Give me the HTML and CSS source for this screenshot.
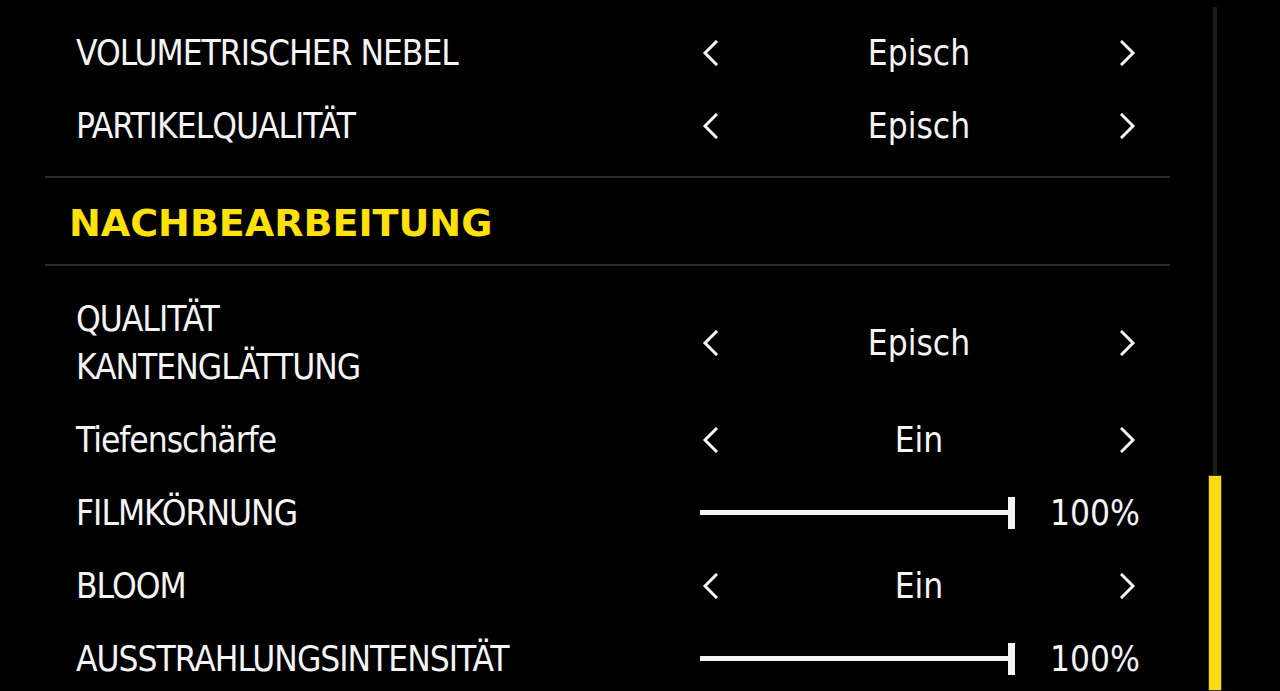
FILE: index.html
```html
<!DOCTYPE html>
<html lang="de">
<head>
<meta charset="utf-8">
<title>Grafik</title>
<link rel="stylesheet" href="styles.css">
</head>
<body>
<div class="screen">
  <div class="panel">
    <div class="row">
      <div class="label">VOLUMETRISCHER NEBEL</div>
      <div class="select">
        <svg class="chev" viewBox="0 0 16 26"><path d="M14 2 L3 13 L14 24"/></svg>
        <span class="value">Episch</span>
        <svg class="chev" viewBox="0 0 16 26"><path d="M2 2 L13 13 L2 24"/></svg>
      </div>
    </div>
    <div class="row">
      <div class="label">PARTIKELQUALITÄT</div>
      <div class="select">
        <svg class="chev" viewBox="0 0 16 26"><path d="M14 2 L3 13 L14 24"/></svg>
        <span class="value">Episch</span>
        <svg class="chev" viewBox="0 0 16 26"><path d="M2 2 L13 13 L2 24"/></svg>
      </div>
    </div>
    <div class="section">
      <h2 class="section-title">NACHBEARBEITUNG</h2>
    </div>
    <div class="rows">
      <div class="row">
        <div class="label">QUALITÄT<br>KANTENGLÄTTUNG</div>
        <div class="select">
          <svg class="chev" viewBox="0 0 16 26"><path d="M14 2 L3 13 L14 24"/></svg>
          <span class="value">Episch</span>
          <svg class="chev" viewBox="0 0 16 26"><path d="M2 2 L13 13 L2 24"/></svg>
        </div>
      </div>
      <div class="row">
        <div class="label">Tiefenschärfe</div>
        <div class="select">
          <svg class="chev" viewBox="0 0 16 26"><path d="M14 2 L3 13 L14 24"/></svg>
          <span class="value">Ein</span>
          <svg class="chev" viewBox="0 0 16 26"><path d="M2 2 L13 13 L2 24"/></svg>
        </div>
      </div>
      <div class="row">
        <div class="label">FILMKÖRNUNG</div>
        <div class="slider">
          <div class="track"><div class="fill" style="width:100%"></div><div class="thumb"></div></div>
          <span class="pct">100%</span>
        </div>
      </div>
      <div class="row">
        <div class="label">BLOOM</div>
        <div class="select">
          <svg class="chev" viewBox="0 0 16 26"><path d="M14 2 L3 13 L14 24"/></svg>
          <span class="value">Ein</span>
          <svg class="chev" viewBox="0 0 16 26"><path d="M2 2 L13 13 L2 24"/></svg>
        </div>
      </div>
      <div class="row">
        <div class="label">AUSSTRAHLUNGSINTENSITÄT</div>
        <div class="slider">
          <div class="track"><div class="fill" style="width:100%"></div><div class="thumb"></div></div>
          <span class="pct">100%</span>
        </div>
      </div>
    </div>
  </div>
  <div class="scrollbar">
    <div class="sb-track"></div>
    <div class="sb-thumb"></div>
  </div>
</div>
</body>
</html>
```
FILE: styles.css
```css
html, body {
  margin: 0;
  padding: 0;
  background: #000;
  height: 100%;
  overflow: hidden;
}
.screen {
  display: flex;
  height: 691px;
  color: #f4f4f4;
  font-family: "DejaVu Sans Condensed", "DejaVu Sans", sans-serif;
  font-stretch: condensed;
}
.panel {
  margin-left: 45px;
  width: 1125px;
  padding-top: 16px;
}
.row {
  display: grid;
  grid-template-columns: 1fr 440px;
  align-items: center;
  padding: 12.5px 30px 12.5px 31px;
}
.label {
  font-size: 35px;
  line-height: 48px;
  letter-spacing: -1px;
}
.select {
  display: flex;
  align-items: center;
  justify-content: space-between;
  padding: 0 4px 0 2px;
  height: 48px;
}
.chev {
  width: 16px;
  height: 26px;
  fill: none;
  stroke: #f4f4f4;
  stroke-width: 3;
  stroke-linecap: square;
}
.value {
  font-size: 35px;
  line-height: 48px;
  letter-spacing: 0;
}
.section {
  margin-top: 14px;
  border-top: 2px solid #2c2c2c;
  border-bottom: 2px solid #2c2c2c;
  height: 86px;
  display: flex;
  align-items: center;
  margin-bottom: 16px;
}
.section-title {
  margin: 0;
  padding: 3px 0 0 24px;
  font-family: "DejaVu Sans", sans-serif;
  font-stretch: normal;
  font-weight: bold;
  font-size: 38px;
  letter-spacing: 0;
  color: #ffe10a;
}
.slider {
  display: flex;
  align-items: center;
  height: 48px;
}
.track {
  position: relative;
  width: 315px;
  height: 5px;
}
.fill {
  height: 5px;
  background: #f4f4f4;
}
.thumb {
  position: absolute;
  right: 0;
  top: -13px;
  width: 7px;
  height: 32px;
  background: #f4f4f4;
}
.pct {
  margin-left: auto;
  font-size: 35px;
  line-height: 48px;
  letter-spacing: 0;
}
.scrollbar {
  margin-left: 38px;
  width: 14px;
  display: flex;
  flex-direction: column;
  align-items: center;
  padding-top: 7px;
}
.sb-track {
  flex: 1;
  width: 4px;
  background: #1c1c1c;
}
.sb-thumb {
  height: 216px;
  width: 14px;
  box-sizing: border-box;
  background: #f7dc12;
  border: 1px solid #3a3000;
}
```
